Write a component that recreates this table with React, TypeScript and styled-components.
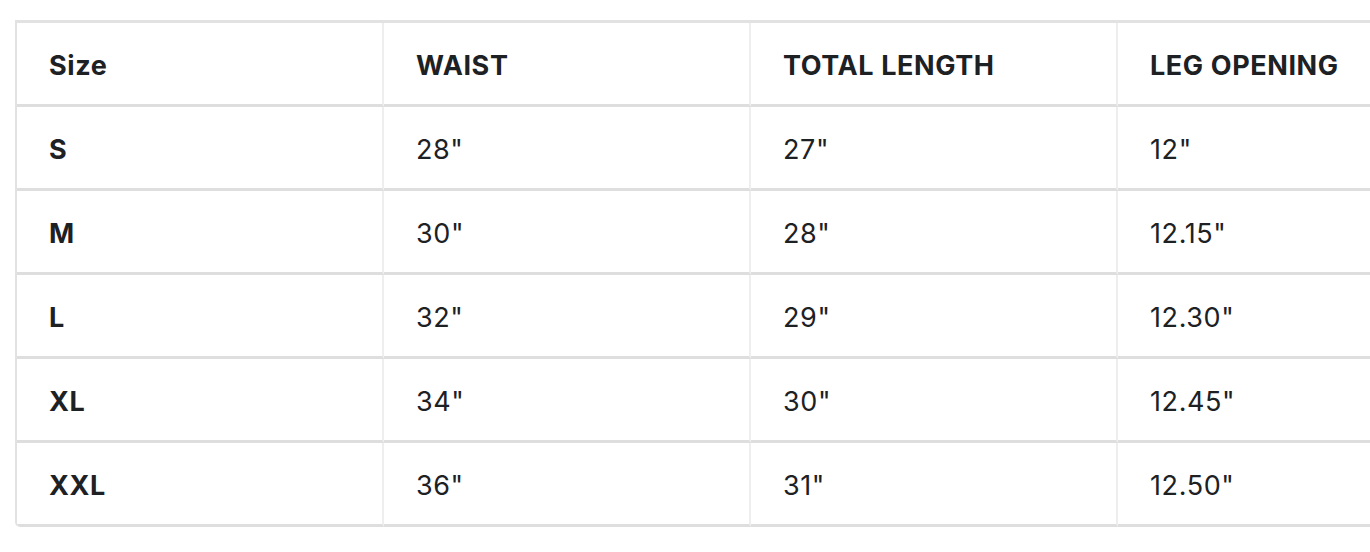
import React from 'react';
import styled, {createGlobalStyle} from 'styled-components';

const GlobalStyle = createGlobalStyle`
    html, body {
        margin: 0;
        padding: 0;
        background: #ffffff;
        overflow: hidden;
    }
    body {
        font-family: Inter, "Noto Sans", "Liberation Sans", sans-serif;
        color: #1d2124;
    }
`;

const Page = styled.div`
    padding: 20px 0 0 15px;
    width: 1600px;
`;

const Table = styled.table`
    border-collapse: separate;
    border-spacing: 0;
    width: 1470px;
    table-layout: fixed;
    border-top: 3px solid #e2e2e2;
    border-left: 2px solid #e2e2e2;
    border-bottom-left-radius: 5px;
    overflow: hidden;
`;

const Row = styled.tr``;

const Cell = styled.td<{$bold?: boolean}>`
    height: 84px;
    box-sizing: border-box;
    padding: 4px 0 0 32px;
    border-bottom: 3px solid #dedede;
    border-right: 2px solid #eeeeee;
    font-size: 27px;
    letter-spacing: 0.6px;
    font-weight: ${p => (p.$bold ? 700 : 400)};
    text-align: left;
    vertical-align: middle;
    white-space: nowrap;
`;

const headers = ['Size', 'WAIST', 'TOTAL LENGTH', 'LEG OPENING'];

const rows = [
    ['S', '28"', '27"', '12"'],
    ['M', '30"', '28"', '12.15"'],
    ['L', '32"', '29"', '12.30"'],
    ['XL', '34"', '30"', '12.45"'],
    ['XXL', '36"', '31"', '12.50"'],
];

export default function App() {
    return (
        <Page>
            <GlobalStyle />
            <Table>
                <thead>
                    <Row>
                        {headers.map(h => (
                            <Cell as="th" key={h} $bold>{h}</Cell>
                        ))}
                    </Row>
                </thead>
                <tbody>
                    {rows.map(r => (
                        <Row key={r[0]}>
                            {r.map((v, i) => (
                                <Cell key={i} $bold={i === 0}>{v}</Cell>
                            ))}
                        </Row>
                    ))}
                </tbody>
            </Table>
        </Page>
    );
}
